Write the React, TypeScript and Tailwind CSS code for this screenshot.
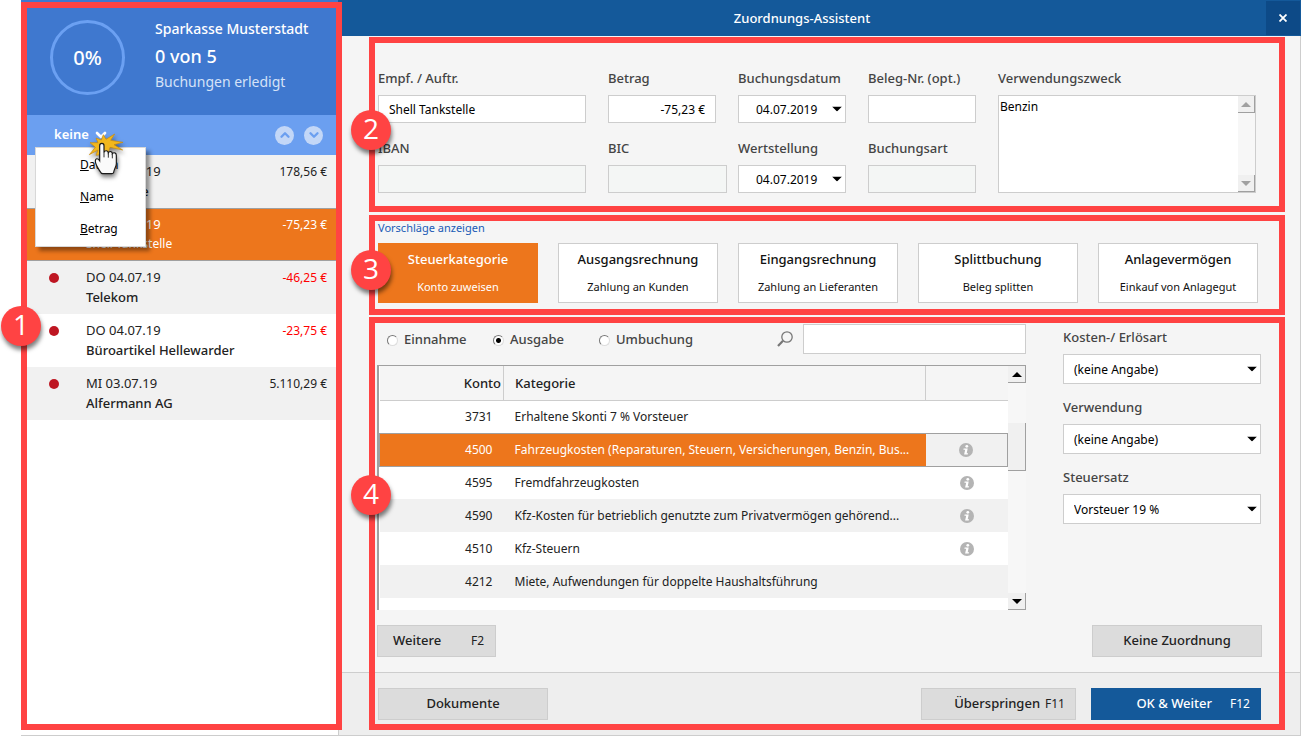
import React, { useState } from 'react';
import clsx from 'clsx';
import { FiChevronDown, FiChevronUp } from 'react-icons/fi';

type Booking = {
  date: string;
  name: string;
  amount: string;
  negative?: boolean;
};

const bookings: Booking[] = [
  { date: 'DO 04.07.19', name: 'Mietkasse', amount: '178,56 €' },
  { date: 'DO 04.07.19', name: 'Shell Tankstelle', amount: '-75,23 €', negative: true },
  { date: 'DO 04.07.19', name: 'Telekom', amount: '-46,25 €', negative: true },
  { date: 'DO 04.07.19', name: 'Büroartikel Hellewarder', amount: '-23,75 €', negative: true },
  { date: 'MI 03.07.19', name: 'Alfermann AG', amount: '5.110,29 €' },
];

const categories = [
  { title: 'Steuerkategorie', text: 'Konto zuweisen' },
  { title: 'Ausgangsrechnung', text: 'Zahlung an Kunden' },
  { title: 'Eingangsrechnung', text: 'Zahlung an Lieferanten' },
  { title: 'Splittbuchung', text: 'Beleg splitten' },
  { title: 'Anlagevermögen', text: 'Einkauf von Anlagegut' },
];

const accounts = [
  { konto: '3731', name: 'Erhaltene Skonti 7 % Vorsteuer', info: false },
  { konto: '4500', name: 'Fahrzeugkosten (Reparaturen, Steuern, Versicherungen, Benzin, Bus...', info: true },
  { konto: '4595', name: 'Fremdfahrzeugkosten', info: true },
  { konto: '4590', name: 'Kfz-Kosten für betrieblich genutzte zum Privatvermögen gehörend...', info: true },
  { konto: '4510', name: 'Kfz-Steuern', info: true },
  { konto: '4212', name: 'Miete, Aufwendungen für doppelte Haushaltsführung', info: false },
];

const Frame = ({ className }: { className: string }) => (
  <div className={clsx('pointer-events-none absolute z-10 border-6 border-[#ff4343]', className)} />
);

const Badge = ({ value, className }: { value: number; className: string }) => (
  <span
    className={clsx(
      "absolute z-20 flex size-10 items-center justify-center rounded-full bg-[#ff4343] pb-1 font-['Open_Sans',sans-serif] text-[28px] leading-none text-white shadow-[1px_4px_4px_rgba(0,0,0,0.5)]",
      className,
    )}
  >
    {value}
  </span>
);

const Triangle = ({ up, className }: { up?: boolean; className?: string }) => (
  <svg viewBox="0 0 10 5" className={clsx('h-[5px] w-[10px]', className)} fill="currentColor">
    <path d={up ? 'M5 0L10 5H0Z' : 'M0 0H10L5 5Z'} />
  </svg>
);

const Label = ({ htmlFor, children }: { htmlFor: string; children: React.ReactNode }) => (
  <label htmlFor={htmlFor} className="mb-[7px] block h-5 text-[13px] leading-5 font-medium whitespace-nowrap text-[#444]">
    {children}
  </label>
);

type FieldProps = {
  id: string;
  label: string;
  value?: string;
  disabled?: boolean;
  className?: string;
  inputClass?: string;
};

const TextField = ({ id, label, value = '', disabled, className, inputClass }: FieldProps) => (
  <div className={className}>
    <Label htmlFor={id}>{label}</Label>
    <input
      id={id}
      type="text"
      defaultValue={value}
      disabled={disabled}
      className={clsx(
        'block h-7 w-full border border-[#cdcdcd] px-[10px] text-xs text-black outline-none',
        disabled ? 'bg-[#f4f6f5]' : 'bg-white',
        inputClass,
      )}
    />
  </div>
);

const SelectField = ({ id, label, value, className, inputClass }: FieldProps) => (
  <div className={className}>
    <Label htmlFor={id}>{label}</Label>
    <div className="relative">
      <select
        id={id}
        className={clsx('block w-full appearance-none border border-[#cdcdcd] bg-white pt-px text-xs text-black outline-none', inputClass)}
      >
        <option>{value}</option>
      </select>
      <Triangle className="pointer-events-none absolute top-1/2 right-1 -translate-y-1/2" />
    </div>
  </div>
);

const ScrollButton = ({ up, muted }: { up?: boolean; muted?: boolean }) => (
  <button
    type="button"
    aria-label={up ? 'Nach oben' : 'Nach unten'}
    className={clsx(
      'flex h-[17px] w-full shrink-0 items-center justify-center border-r border-b border-[#a0a0a0] bg-[#f0f0f0]',
      muted ? 'text-[#a0a0a0]' : 'text-black',
    )}
  >
    <Triangle up={up} className="h-1 w-2" />
  </button>
);

const InfoIcon = () => (
  <svg viewBox="0 0 14 14" className="mx-auto block size-[14px]">
    <circle cx="7" cy="7" r="7" fill="#b4b4b4" />
    <circle cx="7.8" cy="3.3" r="1.4" fill="#fff" />
    <path d="M4.6 5.5H8.7L7.7 10.2H9.1L8.7 11.5H5.1L6.2 6.8H4.4Z" fill="#fff" />
  </svg>
);

const ClickCursor = () => (
  <svg viewBox="0 0 117 156" className="pointer-events-none absolute top-[130px] left-[67px] z-30 h-[52px] w-[39px] drop-shadow-[1px_3px_2px_rgba(0,0,0,0.5)]">
    <path
      d="M6 38L30 38L24 24L40 30L46 14L54 28L80 12L68 31L105 37L78 44L104 60L66 52L60 70L24 76L30 60L4 74L22 52Z"
      fill="#f2b71c"
      stroke="#c98a0a"
      strokeWidth="2"
    />
    <path
      d="M35 47C35 38 48 38 48 47V67C51 60 60 61 61 69C64 62 73 64 73 71C77 66 85 68 85 76V101C85 110 78 118 77 127Q76 131 71 131H44Q39 131 36 124C29 113 22 103 22 94C22 84 30 84 35 92Z"
      fill="#fafafa"
      stroke="#1a1a1a"
      strokeWidth="3.5"
    />
    <path d="M48 66V82M61 69V83M73 72V85" stroke="#333" strokeWidth="3" />
  </svg>
);

const Sidebar = () => {
  const [selected, setSelected] = useState(1);

  return (
    <aside className="relative w-[317px] shrink-0 bg-white">
      <div className="flex h-[115px] bg-[#3f78cf] text-white">
        <div className="mt-5 ml-[29px] flex size-[75px] shrink-0 items-center justify-center rounded-full border-3 border-[#6ba0f2] text-xl font-medium">
          0%
        </div>
        <div className="ml-[30px] pt-[18px] whitespace-nowrap">
          <p className="text-sm leading-[22px] font-medium">Sparkasse Musterstadt</p>
          <p className="text-lg leading-8 font-medium">0 von 5</p>
          <p className="text-sm leading-5 text-[#d5e2f7]">Buchungen erledigt</p>
        </div>
      </div>

      {/* Sort bar */}
      <div className="flex h-10 items-center bg-[#6b9ff0] pr-[15px] pl-[33px]">
        <button type="button" className="flex items-center gap-1 text-[13px] font-semibold text-white">
          keine
          <FiChevronDown className="size-4" strokeWidth={4} />
        </button>
        <div className="ml-auto flex gap-[10px]">
          <button type="button" aria-label="Vorherige Buchung" className="flex size-[19px] items-center justify-center rounded-full bg-[#c3d7f7] text-[#6b9ff0]">
            <FiChevronUp className="size-3.5" strokeWidth={4} />
          </button>
          <button type="button" aria-label="Nächste Buchung" className="flex size-[19px] items-center justify-center rounded-full bg-[#c3d7f7] text-[#6b9ff0]">
            <FiChevronDown className="size-3.5" strokeWidth={4} />
          </button>
        </div>
      </div>

      <ul>
        {bookings.map((booking, index) => {
          const active = index === selected;
          return (
            <li
              key={index}
              onClick={() => setSelected(index)}
              className={clsx(
                'flex h-[53px] cursor-pointer pr-[11px] pl-[28px]',
                active
                  ? 'border-y border-[#a0a0a0] bg-[#ed761c] pt-[5px] text-white'
                  : 'pt-1.5 text-[#222]',
                !active && (index % 2 === 0 ? 'bg-[#f1f1f1]' : 'bg-white'),
              )}
            >
              <span className={clsx('mt-1.5 size-[10px] shrink-0 rounded-full', active ? 'bg-white' : 'bg-[#be1622]')} />
              <div className="ml-[27px]">
                <p className="text-[13px] leading-5">{booking.date}</p>
                <p className={clsx('leading-5', active ? 'text-xs' : 'text-[13px] font-medium')}>{booking.name}</p>
              </div>
              <span className={clsx('ml-auto pt-px text-xs leading-5', booking.negative && !active && 'text-[#f00]')}>
                {booking.amount}
              </span>
            </li>
          );
        })}
      </ul>

      {/* Sort menu */}
      <div className="absolute top-[147px] left-[14px] z-20 flex h-[100px] w-[111px] flex-col border border-[#d8d8d8] bg-white pt-px text-xs text-black shadow-[4px_4px_4px_rgba(0,0,0,0.4)]">
        <button type="button" className="h-8 pl-11 text-left"><u>D</u>atum</button>
        <button type="button" className="h-8 pl-11 text-left"><u>N</u>ame</button>
        <button type="button" className="h-8 pl-11 text-left"><u>B</u>etrag</button>
      </div>
      <ClickCursor />

      <Frame className="top-0.5 -right-1 bottom-[5px] left-0" />
      <Badge value={1} className="top-[306px] -left-5" />
    </aside>
  );
};

const BookingForm = () => (
  <section className="relative mt-px mr-[15px] ml-[30px] grid grid-cols-[208fr_108fr_108fr_108fr_258fr] gap-x-[22px] gap-y-[15px] pt-[31px] pr-[29px] pb-[19px] pl-[9px]">
    <TextField id="empf" label="Empf. / Auftr." value="Shell Tankstelle" />
    <TextField id="betrag" label="Betrag" value="-75,23 €" inputClass="text-right" />
    <SelectField id="datum" label="Buchungsdatum" value="04.07.2019" inputClass="h-7 pl-[17px]" />
    <TextField id="beleg" label="Beleg-Nr. (opt.)" />
    <div className="row-span-2 flex flex-col">
      <Label htmlFor="zweck">Verwendungszweck</Label>
      <div className="flex flex-1 border border-[#cdcdcd] bg-white">
        <textarea
          id="zweck"
          defaultValue="Benzin"
          className="min-w-0 flex-1 resize-none overflow-hidden px-px pt-[3px] text-xs text-black outline-none"
        />
        <div className="flex w-[17px] flex-col justify-between bg-[#f7f7f7]">
          <ScrollButton up muted />
          <ScrollButton muted />
        </div>
      </div>
    </div>
    <TextField id="iban" label="IBAN" disabled />
    <TextField id="bic" label="BIC" disabled className="-mr-[11px]" />
    <SelectField id="wert" label="Wertstellung" value="04.07.2019" inputClass="h-7 pl-[17px]" />
    <TextField id="art" label="Buchungsart" disabled />

    <Frame className="inset-0" />
    <Badge value={2} className="top-[73px] -left-[18px]" />
  </section>
);

const CategoryPicker = () => {
  const [current, setCurrent] = useState(0);

  return (
    <section className="relative mt-[3px] mr-[15px] ml-[30px] pt-[3px] pr-[27px] pb-3 pl-[9px]">
      <a href="#" className="block w-fit text-[11px] leading-5 text-[#1a5bb5]">Vorschläge anzeigen</a>
      <div className="mt-[5px] grid grid-cols-5 gap-5">
        {categories.map((item, index) => (
          <button
            key={item.title}
            type="button"
            onClick={() => setCurrent(index)}
            className={clsx(
              'flex h-[60px] flex-col items-center border whitespace-nowrap',
              index === current
                ? 'border-[#ed761c] bg-[#ed761c] text-white'
                : 'border-[#cdcdcd] bg-white text-[#111]',
            )}
          >
            <span className="mt-[5px] text-[13px] leading-5 font-medium">{item.title}</span>
            <span className="mt-2 text-[11px] leading-5">{item.text}</span>
          </button>
        ))}
      </div>

      <Frame className="inset-0" />
      <Badge value={3} className="top-[35px] -left-[18px]" />
    </section>
  );
};

const AccountTable = () => (
  <div className="mt-[11px] flex h-[245px] border-t border-l-2 border-[#a0a0a0] bg-white">
    <div className="min-w-0 flex-1 overflow-hidden">
      <table className="w-full table-fixed border-collapse text-xs text-[#222]">
        <colgroup>
          <col className="w-[124px]" />
          <col />
          <col className="w-[82px]" />
        </colgroup>
        <thead>
          <tr className="h-[34px] border-b border-[#cdcdcd] bg-[#f5f5f5] text-[13px]">
            <th className="border-r border-[#cdcdcd] pt-0.5 pr-0.5 text-right font-medium">Konto</th>
            <th className="border-r border-[#cdcdcd] pt-0.5 pl-[11px] text-left font-medium">Kategorie</th>
            <th aria-label="Info" />
          </tr>
        </thead>
        <tbody>
          {accounts.map((row, index) => {
            const active = row.konto === '4500';
            return (
              <tr
                key={row.konto}
                className={clsx(
                  'h-[33px]',
                  active && 'border border-[#a0a0a0]',
                  index % 2 === 1 ? 'bg-[#f1f1f1]' : 'bg-white',
                )}
              >
                <td className={clsx('pr-[11px] text-right', active && 'bg-[#ed761c] text-white')}>{row.konto}</td>
                <td className={clsx('overflow-hidden pl-[11px] whitespace-nowrap', active && 'bg-[#ed761c] text-white')}>
                  {row.name}
                </td>
                <td>{row.info && <InfoIcon />}</td>
              </tr>
            );
          })}
        </tbody>
      </table>
    </div>
    <div className="flex w-[18px] flex-col bg-[#f7f7f7]">
      <ScrollButton up />
      <div className="mt-10 h-12 border-r border-b border-[#a0a0a0] bg-[#f0f0f0]" />
      <div className="mt-auto">
        <ScrollButton />
      </div>
    </div>
  </div>
);

const greyButton = 'h-8 border border-[#cdcdcd] bg-[#dcdcdc] text-[13px] font-medium text-[#222]';

const Assignment = () => (
  <section className="relative mt-0.5 flex flex-1 flex-col">
    <div className="flex pt-[7px] pr-[39px] pl-[38px]">
      <div className="min-w-0 flex-1">
        <div className="flex h-[30px] items-center text-[13px] font-medium text-[#444]">
          {['Einnahme', 'Ausgabe', 'Umbuchung'].map((kind) => (
            <label key={kind} className="flex w-[106px] items-center gap-1.5 pt-0.5 pl-[10px]">
              <input
                type="radio"
                name="kind"
                defaultChecked={kind === 'Ausgabe'}
                className="size-[11px] shrink-0 appearance-none rounded-full border border-[#ddd] border-t-[#777] border-l-[#777] bg-white checked:bg-[radial-gradient(circle,#000_2px,#fff_3px)]"
              />
              {kind}
            </label>
          ))}
          <label htmlFor="suche" aria-label="Suche" className="ml-auto text-[#777]">
            <svg viewBox="0 0 16 16" className="size-4" fill="none" stroke="currentColor">
              <circle cx="10" cy="6" r="5.2" strokeWidth="1.3" />
              <path d="M6 9.8L1 15" strokeWidth="2.2" />
            </svg>
          </label>
          <input id="suche" type="text" className="ml-[10px] h-[30px] w-[223px] border border-[#cdcdcd] bg-white px-2 text-xs outline-none" />
        </div>
        <AccountTable />
      </div>
      <div className="ml-[37px] w-[198px] shrink-0 pt-[3px]">
        <SelectField id="kosten" label="Kosten-/ Erlösart" value="(keine Angabe)" inputClass="h-[30px] pl-[10px]" />
        <SelectField id="verwendung" label="Verwendung" value="(keine Angabe)" className="mt-[13px]" inputClass="h-[30px] pl-[10px]" />
        <SelectField id="steuersatz" label="Steuersatz" value="Vorsteuer 19 %" className="mt-[13px]" inputClass="h-[30px] pl-[10px]" />
      </div>
    </div>
    <div className="flex justify-between px-[38px] py-[15px]">
      <button type="button" className={clsx(greyButton, 'flex w-[119px] items-center justify-between pr-[11px] pl-[15px]')}>
        Weitere <span className="text-xs font-normal">F2</span>
      </button>
      <button type="button" className={clsx(greyButton, 'w-[170px]')}>Keine Zuordnung</button>
    </div>

    <footer className="flex flex-1 gap-[15px] border-t border-[#cdcdcd] bg-[#eee] px-[39px] py-[15px]">
      <button type="button" className={clsx(greyButton, 'w-[170px]')}>Dokumente</button>
      <button type="button" className={clsx(greyButton, 'ml-auto flex w-[155px] items-center justify-end gap-[5px] pr-[10px]')}>
        Überspringen <span className="text-xs font-normal">F11</span>
      </button>
      <button type="button" className="flex h-8 w-[170px] items-center justify-end gap-[18px] bg-[#14599a] pr-[11px] text-[13px] font-medium text-white">
        OK &amp; Weiter <span className="text-xs font-normal">F12</span>
      </button>
    </footer>

    <Frame className="top-0 right-[15px] bottom-[5px] left-[30px]" />
    <Badge value={4} className="top-[158px] left-3" />
  </section>
);

const App: React.FC = () => {
  return (
    <div className="min-h-screen bg-white pl-[21px] font-['Noto_Sans',sans-serif]">
      <div className="flex min-h-screen border-b border-[#cdcdcd]">
        <Sidebar />
        <main className="flex min-w-0 flex-1 flex-col bg-[#f5f5f5]">
          <header className="flex h-9 bg-[#14599a] text-white">
            <h1 className="flex-1 text-center text-[13px] leading-9 font-medium">Zuordnungs-Assistent</h1>
            <button type="button" aria-label="Schließen" className="my-px mr-px flex w-[34px] items-center justify-center bg-[#0d4a87]">
              <svg viewBox="0 0 8 8" className="size-2" stroke="#fff" strokeWidth="1.8">
                <path d="M0.5 0.5L7.5 7.5M7.5 0.5L0.5 7.5" />
              </svg>
            </button>
          </header>
          <div className="flex flex-1 flex-col border-r border-l border-[#cdcdcd]">
            <BookingForm />
            <CategoryPicker />
            <Assignment />
          </div>
        </main>
      </div>
    </div>
  );
};

export default App;
